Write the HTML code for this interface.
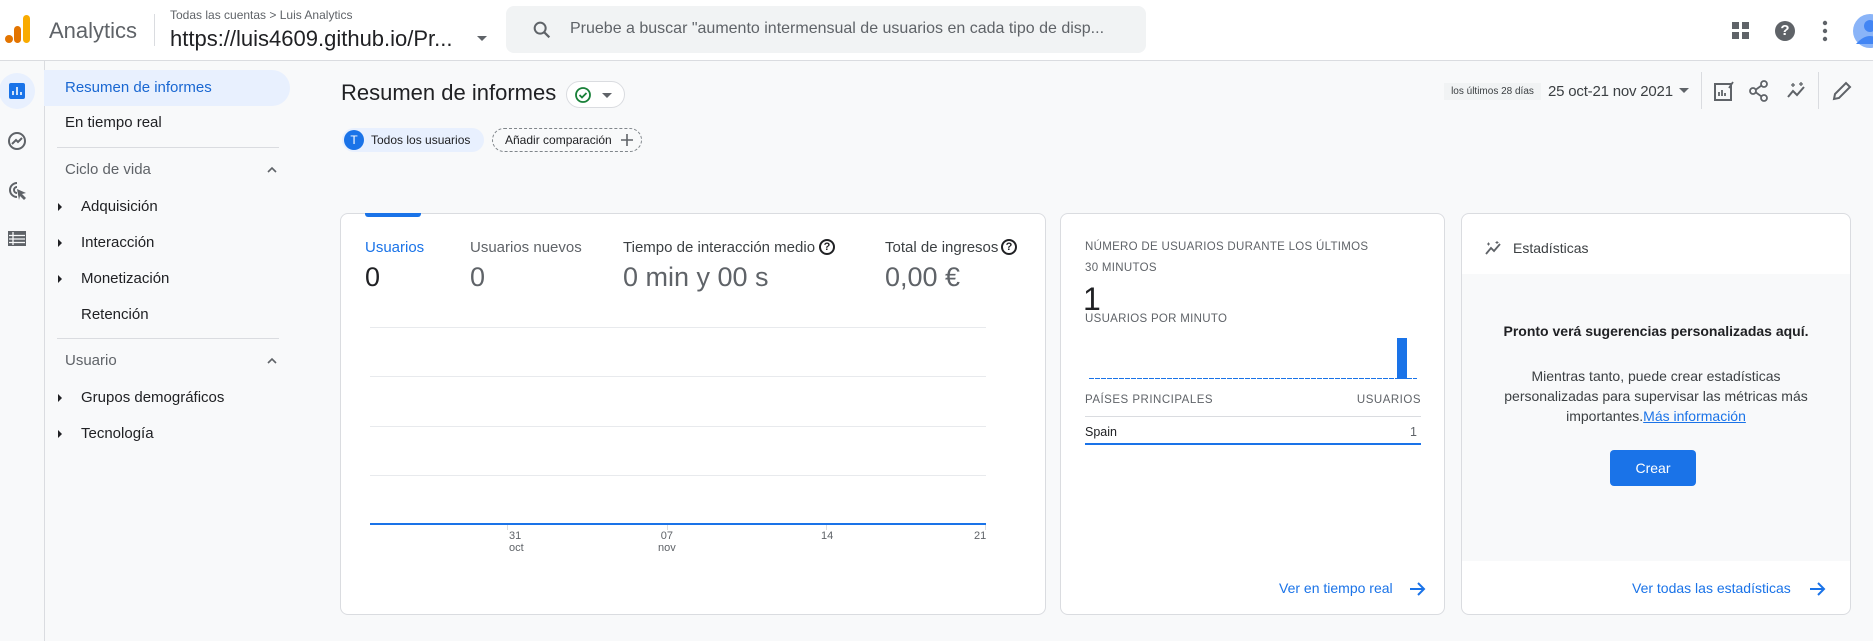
<!DOCTYPE html>
<html><head><meta charset="utf-8"><style>
*{box-sizing:border-box;margin:0;padding:0}
body{width:1873px;height:641px;overflow:hidden;background:#f8f9fa;font-family:"Liberation Sans",Arial,sans-serif;color:#202124;position:relative}
.a{position:absolute;white-space:nowrap}
.card{position:absolute;background:#fff;border:1px solid #dadce0;border-radius:8px;top:213px;height:402px;overflow:hidden}
.side{font-size:15px;color:#202124}
.tri{position:absolute;width:0;height:0;border-top:4px solid transparent;border-bottom:4px solid transparent;border-left:4px solid #202124}
.grid{position:absolute;left:370px;width:616px;height:1px;background:#e8eaed}
</style></head><body>
<!-- header -->
<div class="a" style="left:0;top:0;width:1873px;height:61px;background:#fff;border-bottom:1px solid #dadce0"></div>
<svg class="a" style="left:4px;top:14px" width="26" height="30" viewBox="0 0 26 30"><circle cx="5" cy="25" r="4" fill="#e37400"/><rect x="10" y="12" width="7" height="17" rx="3.5" fill="#e37400"/><rect x="19" y="1" width="7" height="28" rx="3.5" fill="#f9ab00"/></svg>
<div class="a" style="left:49px;top:18px;font-size:22px;color:#5f6368">Analytics</div>
<div class="a" style="left:154px;top:14px;width:1px;height:32px;background:#dadce0"></div>
<div class="a" style="left:170px;top:8px;font-size:12px;color:#5f6368">Todas las cuentas &gt; Luis Analytics</div>
<div class="a" style="left:170px;top:26px;font-size:22px;color:#202124">https://luis4609.github.io/Pr...</div>
<div class="a" style="left:477px;top:36px;border-left:5px solid transparent;border-right:5px solid transparent;border-top:5px solid #5f6368"></div>
<div class="a" style="left:506px;top:6px;width:640px;height:47px;background:#f1f3f4;border-radius:8px"></div>
<svg class="a" style="left:531px;top:19px" width="22" height="22" viewBox="0 0 24 24"><circle cx="10" cy="10" r="6" fill="none" stroke="#5f6368" stroke-width="2.2"/><path d="M14.5 14.5L20 20" stroke="#5f6368" stroke-width="2.4"/></svg>
<div class="a" style="left:570px;top:20px;font-size:16px;color:#5f6368">Pruebe a buscar "aumento intermensual de usuarios en cada tipo de disp...</div>
<svg class="a" style="left:1732px;top:22px" width="18" height="18"><rect x="0" y="0" width="7" height="7" fill="#5f6368"/><rect x="10" y="0" width="7" height="7" fill="#5f6368"/><rect x="0" y="10" width="7" height="7" fill="#5f6368"/><rect x="10" y="10" width="7" height="7" fill="#5f6368"/></svg>
<div class="a" style="left:1775px;top:21px;width:20px;height:20px;border-radius:50%;background:#5f6368;color:#fff;font-size:15px;font-weight:bold;text-align:center;line-height:20px">?</div>
<svg class="a" style="left:1821px;top:20px" width="8" height="22"><circle cx="4" cy="3" r="2.2" fill="#5f6368"/><circle cx="4" cy="11" r="2.2" fill="#5f6368"/><circle cx="4" cy="19" r="2.2" fill="#5f6368"/></svg>
<svg class="a" style="left:1853px;top:14px" width="20" height="34"><circle cx="17" cy="17" r="17" fill="#8ab4f8"/><circle cx="17" cy="12" r="6" fill="#4285f4"/><path d="M3 30 Q17 14 31 30 Z" fill="#4285f4"/></svg>
<!-- rail -->
<div class="a" style="left:44px;top:61px;width:1px;height:580px;background:#dadce0"></div>
<div class="a" style="left:-1px;top:73px;width:36px;height:36px;border-radius:50%;background:#e8f0fe"></div>
<svg class="a" style="left:9px;top:83px" width="16" height="16"><rect width="16" height="16" rx="2" fill="#1a73e8"/><path d="M4 12V8M8 12V4M12 12V9" stroke="#fff" stroke-width="1.6"/></svg>
<svg class="a" style="left:7px;top:131px" width="20" height="20" viewBox="0 0 20 20"><circle cx="10" cy="10" r="8" fill="none" stroke="#5f6368" stroke-width="2"/><path d="M5 13l4-4 2 2 4-4" fill="none" stroke="#5f6368" stroke-width="2"/></svg>
<svg class="a" style="left:7px;top:180px" width="21" height="21" viewBox="0 0 21 21"><path d="M10 3a7 7 0 1 0 0 14" fill="none" stroke="#5f6368" stroke-width="2"/><path d="M10 7a3 3 0 1 0 0 6" fill="none" stroke="#5f6368" stroke-width="2"/><path d="M10 9l9 4-4 1 4 4-2 2-4-4-1 4z" fill="#5f6368"/></svg>
<svg class="a" style="left:8px;top:231px" width="18" height="15"><rect x="0" y="0" width="18" height="15" fill="#5f6368"/><path d="M1 4.5h16M1 8h16M1 11.5h16M5 1v13" stroke="#f8f9fa" stroke-width="1.3"/></svg>
<!-- sidebar -->
<div class="a" style="left:44px;top:70px;width:246px;height:36px;background:#e8f0fe;border-radius:0 18px 18px 0"></div>
<div class="a side" style="left:65px;top:79px;color:#1967d2">Resumen de informes</div>
<div class="a side" style="left:65px;top:114px">En tiempo real</div>
<div class="a" style="left:57px;top:147px;width:222px;height:1px;background:#dadce0"></div>
<div class="a side" style="left:65px;top:161px;color:#5f6368">Ciclo de vida</div>
<svg class="a" style="left:266px;top:166px" width="12" height="8"><path d="M2 6l4-4 4 4" fill="none" stroke="#5f6368" stroke-width="1.6"/></svg>
<div class="tri" style="left:58px;top:203px"></div><div class="a side" style="left:81px;top:198px">Adquisición</div>
<div class="tri" style="left:58px;top:239px"></div><div class="a side" style="left:81px;top:234px">Interacción</div>
<div class="tri" style="left:58px;top:275px"></div><div class="a side" style="left:81px;top:270px">Monetización</div>
<div class="a side" style="left:81px;top:306px">Retención</div>
<div class="a" style="left:57px;top:338px;width:222px;height:1px;background:#dadce0"></div>
<div class="a side" style="left:65px;top:352px;color:#5f6368">Usuario</div>
<svg class="a" style="left:266px;top:357px" width="12" height="8"><path d="M2 6l4-4 4 4" fill="none" stroke="#5f6368" stroke-width="1.6"/></svg>
<div class="tri" style="left:58px;top:394px"></div><div class="a side" style="left:81px;top:389px">Grupos demográficos</div>
<div class="tri" style="left:58px;top:430px"></div><div class="a side" style="left:81px;top:425px">Tecnología</div>
<!-- title -->
<div class="a" style="left:341px;top:80px;font-size:22px">Resumen de informes</div>
<div class="a" style="left:566px;top:81px;width:59px;height:27px;border:1px solid #dadce0;border-radius:14px;background:#fff"></div>
<svg class="a" style="left:574px;top:86px" width="18" height="18"><circle cx="9" cy="9" r="7" fill="none" stroke="#188038" stroke-width="1.8"/><path d="M5.5 9l2.5 2.5 4.5-4.5" fill="none" stroke="#188038" stroke-width="1.8"/></svg>
<div class="a" style="left:602px;top:93px;border-left:5px solid transparent;border-right:5px solid transparent;border-top:5px solid #5f6368"></div>
<div class="a" style="left:342px;top:128px;width:142px;height:24px;background:#e8f0fe;border-radius:12px"></div>
<div class="a" style="left:344px;top:130px;width:20px;height:20px;border-radius:50%;background:#1a73e8;color:#fff;font-size:12px;text-align:center;line-height:20px">T</div>
<div class="a" style="left:371px;top:133px;font-size:12px">Todos los usuarios</div>
<div class="a" style="left:492px;top:128px;width:150px;height:24px;border:1px dashed #80868b;border-radius:12px"></div>
<div class="a" style="left:505px;top:133px;font-size:12px">Añadir comparación</div>
<svg class="a" style="left:620px;top:133px" width="14" height="14"><path d="M7 1v12M1 7h12" stroke="#5f6368" stroke-width="1.6"/></svg>
<!-- date -->
<div class="a" style="left:1444px;top:83px;width:97px;height:17px;background:#f1f3f4;font-size:10px;color:#3c4043;text-align:center;line-height:17px">los últimos 28 días</div>
<div class="a" style="left:1548px;top:83px;font-size:15px;color:#3c4043;letter-spacing:-0.2px">25 oct-21 nov 2021</div>
<div class="a" style="left:1679px;top:88px;border-left:5px solid transparent;border-right:5px solid transparent;border-top:5px solid #5f6368"></div>
<div class="a" style="left:1701px;top:72px;width:1px;height:37px;background:#dadce0"></div>
<div class="a" style="left:1818px;top:72px;width:1px;height:37px;background:#dadce0"></div>
<svg class="a" style="left:1713px;top:80px" width="22" height="22"><rect x="2" y="4" width="16" height="16" fill="none" stroke="#5f6368" stroke-width="2"/><path d="M6 16v-4M9 16v-6M12 16v-3M16 8l4-6" stroke="#5f6368" stroke-width="1.8"/></svg>
<svg class="a" style="left:1749px;top:80px" width="20" height="22"><circle cx="15" cy="4" r="3" fill="none" stroke="#5f6368" stroke-width="1.8"/><circle cx="4" cy="11" r="3" fill="none" stroke="#5f6368" stroke-width="1.8"/><circle cx="15" cy="18" r="3" fill="none" stroke="#5f6368" stroke-width="1.8"/><path d="M7 9.5l5.5-4M7 12.5l5.5 4" stroke="#5f6368" stroke-width="1.8"/></svg>
<svg class="a" style="left:1786px;top:80px" width="22" height="22"><path d="M2 17l5-6 4 4 7-8" fill="none" stroke="#5f6368" stroke-width="2"/><path d="M5 5h4M7 3v4M15 2v4M13 4h4" stroke="#5f6368" stroke-width="1.3"/></svg>
<svg class="a" style="left:1831px;top:80px" width="22" height="22"><path d="M3 19l1-5L15 3l4 4L8 18z" fill="none" stroke="#5f6368" stroke-width="2"/></svg>
<!-- card1 -->
<div class="card" style="left:340px;width:706px"></div>
<div class="a" style="left:365px;top:213px;width:56px;height:4px;background:#1a73e8;border-radius:0 0 3px 3px"></div>
<div class="a" style="left:365px;top:239px;font-size:15px;color:#1a73e8">Usuarios</div>
<div class="a" style="left:365px;top:262px;font-size:27px">0</div>
<div class="a" style="left:470px;top:239px;font-size:15px;color:#5f6368">Usuarios nuevos</div>
<div class="a" style="left:470px;top:262px;font-size:27px;color:#5f6368">0</div>
<div class="a" style="left:623px;top:239px;font-size:15px;color:#3c4043">Tiempo de interacción medio</div>
<div class="a" style="left:819px;top:239px;width:16px;height:16px;border:2px solid #202124;border-radius:50%;font-size:11px;font-weight:bold;text-align:center;line-height:12px">?</div>
<div class="a" style="left:623px;top:262px;font-size:27px;color:#5f6368">0 min y 00 s</div>
<div class="a" style="left:885px;top:239px;font-size:15px;color:#3c4043">Total de ingresos</div>
<div class="a" style="left:1001px;top:239px;width:16px;height:16px;border:2px solid #202124;border-radius:50%;font-size:11px;font-weight:bold;text-align:center;line-height:12px">?</div>
<div class="a" style="left:885px;top:262px;font-size:27px;color:#5f6368">0,00 €</div>
<div class="grid" style="top:327px"></div><div class="grid" style="top:376px"></div><div class="grid" style="top:426px"></div><div class="grid" style="top:475px"></div>
<div class="a" style="left:370px;top:523px;width:616px;height:2px;background:#1a73e8"></div>
<div class="a" style="left:507px;top:525px;width:1px;height:5px;background:#dadce0"></div>
<div class="a" style="left:667px;top:525px;width:1px;height:5px;background:#dadce0"></div>
<div class="a" style="left:826px;top:525px;width:1px;height:5px;background:#dadce0"></div>
<div class="a" style="left:985px;top:525px;width:1px;height:5px;background:#dadce0"></div>
<div class="a" style="left:509px;top:530px;font-size:11px;color:#5f6368;line-height:12px">31<br>oct</div>
<div class="a" style="left:658px;top:530px;font-size:11px;color:#5f6368;line-height:12px;text-align:center">07<br>nov</div>
<div class="a" style="left:821px;top:530px;font-size:11px;color:#5f6368">14</div>
<div class="a" style="left:974px;top:530px;font-size:11px;color:#5f6368">21</div>
<!-- card2 -->
<div class="card" style="left:1060px;width:385px"></div>
<div class="a" style="left:1085px;top:241px;font-size:11.5px;color:#5f6368;letter-spacing:.3px">NÚMERO DE USUARIOS DURANTE LOS ÚLTIMOS</div>
<div class="a" style="left:1085px;top:262px;font-size:11.5px;color:#5f6368;letter-spacing:.3px">30 MINUTOS</div>
<div class="a" style="left:1083px;top:283px;font-size:32px;line-height:32px">1</div>
<div class="a" style="left:1085px;top:313px;font-size:11.5px;color:#5f6368;letter-spacing:.3px">USUARIOS POR MINUTO</div>
<div class="a" style="left:1089px;top:378px;width:328px;height:1px;background:repeating-linear-gradient(90deg,#1a73e8 0 5px,transparent 5px 6px)"></div>
<div class="a" style="left:1397px;top:338px;width:10px;height:41px;background:#1a73e8"></div>
<div class="a" style="left:1085px;top:394px;font-size:11.5px;color:#5f6368;letter-spacing:.5px">PAÍSES PRINCIPALES</div>
<div class="a" style="left:1350px;top:394px;width:71px;text-align:right;font-size:11.5px;color:#5f6368;letter-spacing:.5px">USUARIOS</div>
<div class="a" style="left:1085px;top:416px;width:336px;height:1px;background:#dadce0"></div>
<div class="a" style="left:1085px;top:425px;font-size:12.5px">Spain</div>
<div class="a" style="left:1410px;top:425px;font-size:12.5px;color:#5f6368">1</div>
<div class="a" style="left:1085px;top:443px;width:336px;height:2px;background:#1a73e8"></div>
<div class="a" style="left:1279px;top:580px;font-size:14px;color:#1a73e8">Ver en tiempo real</div>
<svg class="a" style="left:1409px;top:581px" width="17" height="16"><path d="M1 8h14M9 2l6 6-6 6" fill="none" stroke="#1a73e8" stroke-width="2"/></svg>
<!-- card3 -->
<div class="card" style="left:1461px;width:390px"></div>
<div class="a" style="left:1462px;top:274px;width:388px;height:287px;background:#f8f9fa"></div>
<svg class="a" style="left:1485px;top:240px" width="18" height="16"><path d="M1 14l5-6 3 3 6-7" fill="none" stroke="#5f6368" stroke-width="1.8"/><path d="M2 4h3M3.5 2.5v3M12 1v3M10.5 2.5h3" stroke="#5f6368" stroke-width="1"/></svg>
<div class="a" style="left:1513px;top:240px;font-size:14px;color:#3c4043">Estadísticas</div>
<div class="a" style="left:1462px;top:323px;width:388px;text-align:center;font-size:14px;font-weight:bold">Pronto verá sugerencias personalizadas aquí.</div>
<div class="a" style="left:1462px;top:366px;width:388px;text-align:center;font-size:14px;line-height:20px;color:#3c4043;white-space:normal;padding:0 30px">Mientras tanto, puede crear estadísticas personalizadas para supervisar las métricas más importantes.<span style="color:#1a73e8;text-decoration:underline">Más información</span></div>
<div class="a" style="left:1610px;top:450px;width:86px;height:36px;background:#1a73e8;border-radius:4px;color:#fff;font-size:14px;text-align:center;line-height:36px">Crear</div>
<div class="a" style="left:1632px;top:580px;font-size:14px;color:#1a73e8">Ver todas las estadísticas</div>
<svg class="a" style="left:1809px;top:581px" width="17" height="16"><path d="M1 8h14M9 2l6 6-6 6" fill="none" stroke="#1a73e8" stroke-width="2"/></svg>
</body></html>
